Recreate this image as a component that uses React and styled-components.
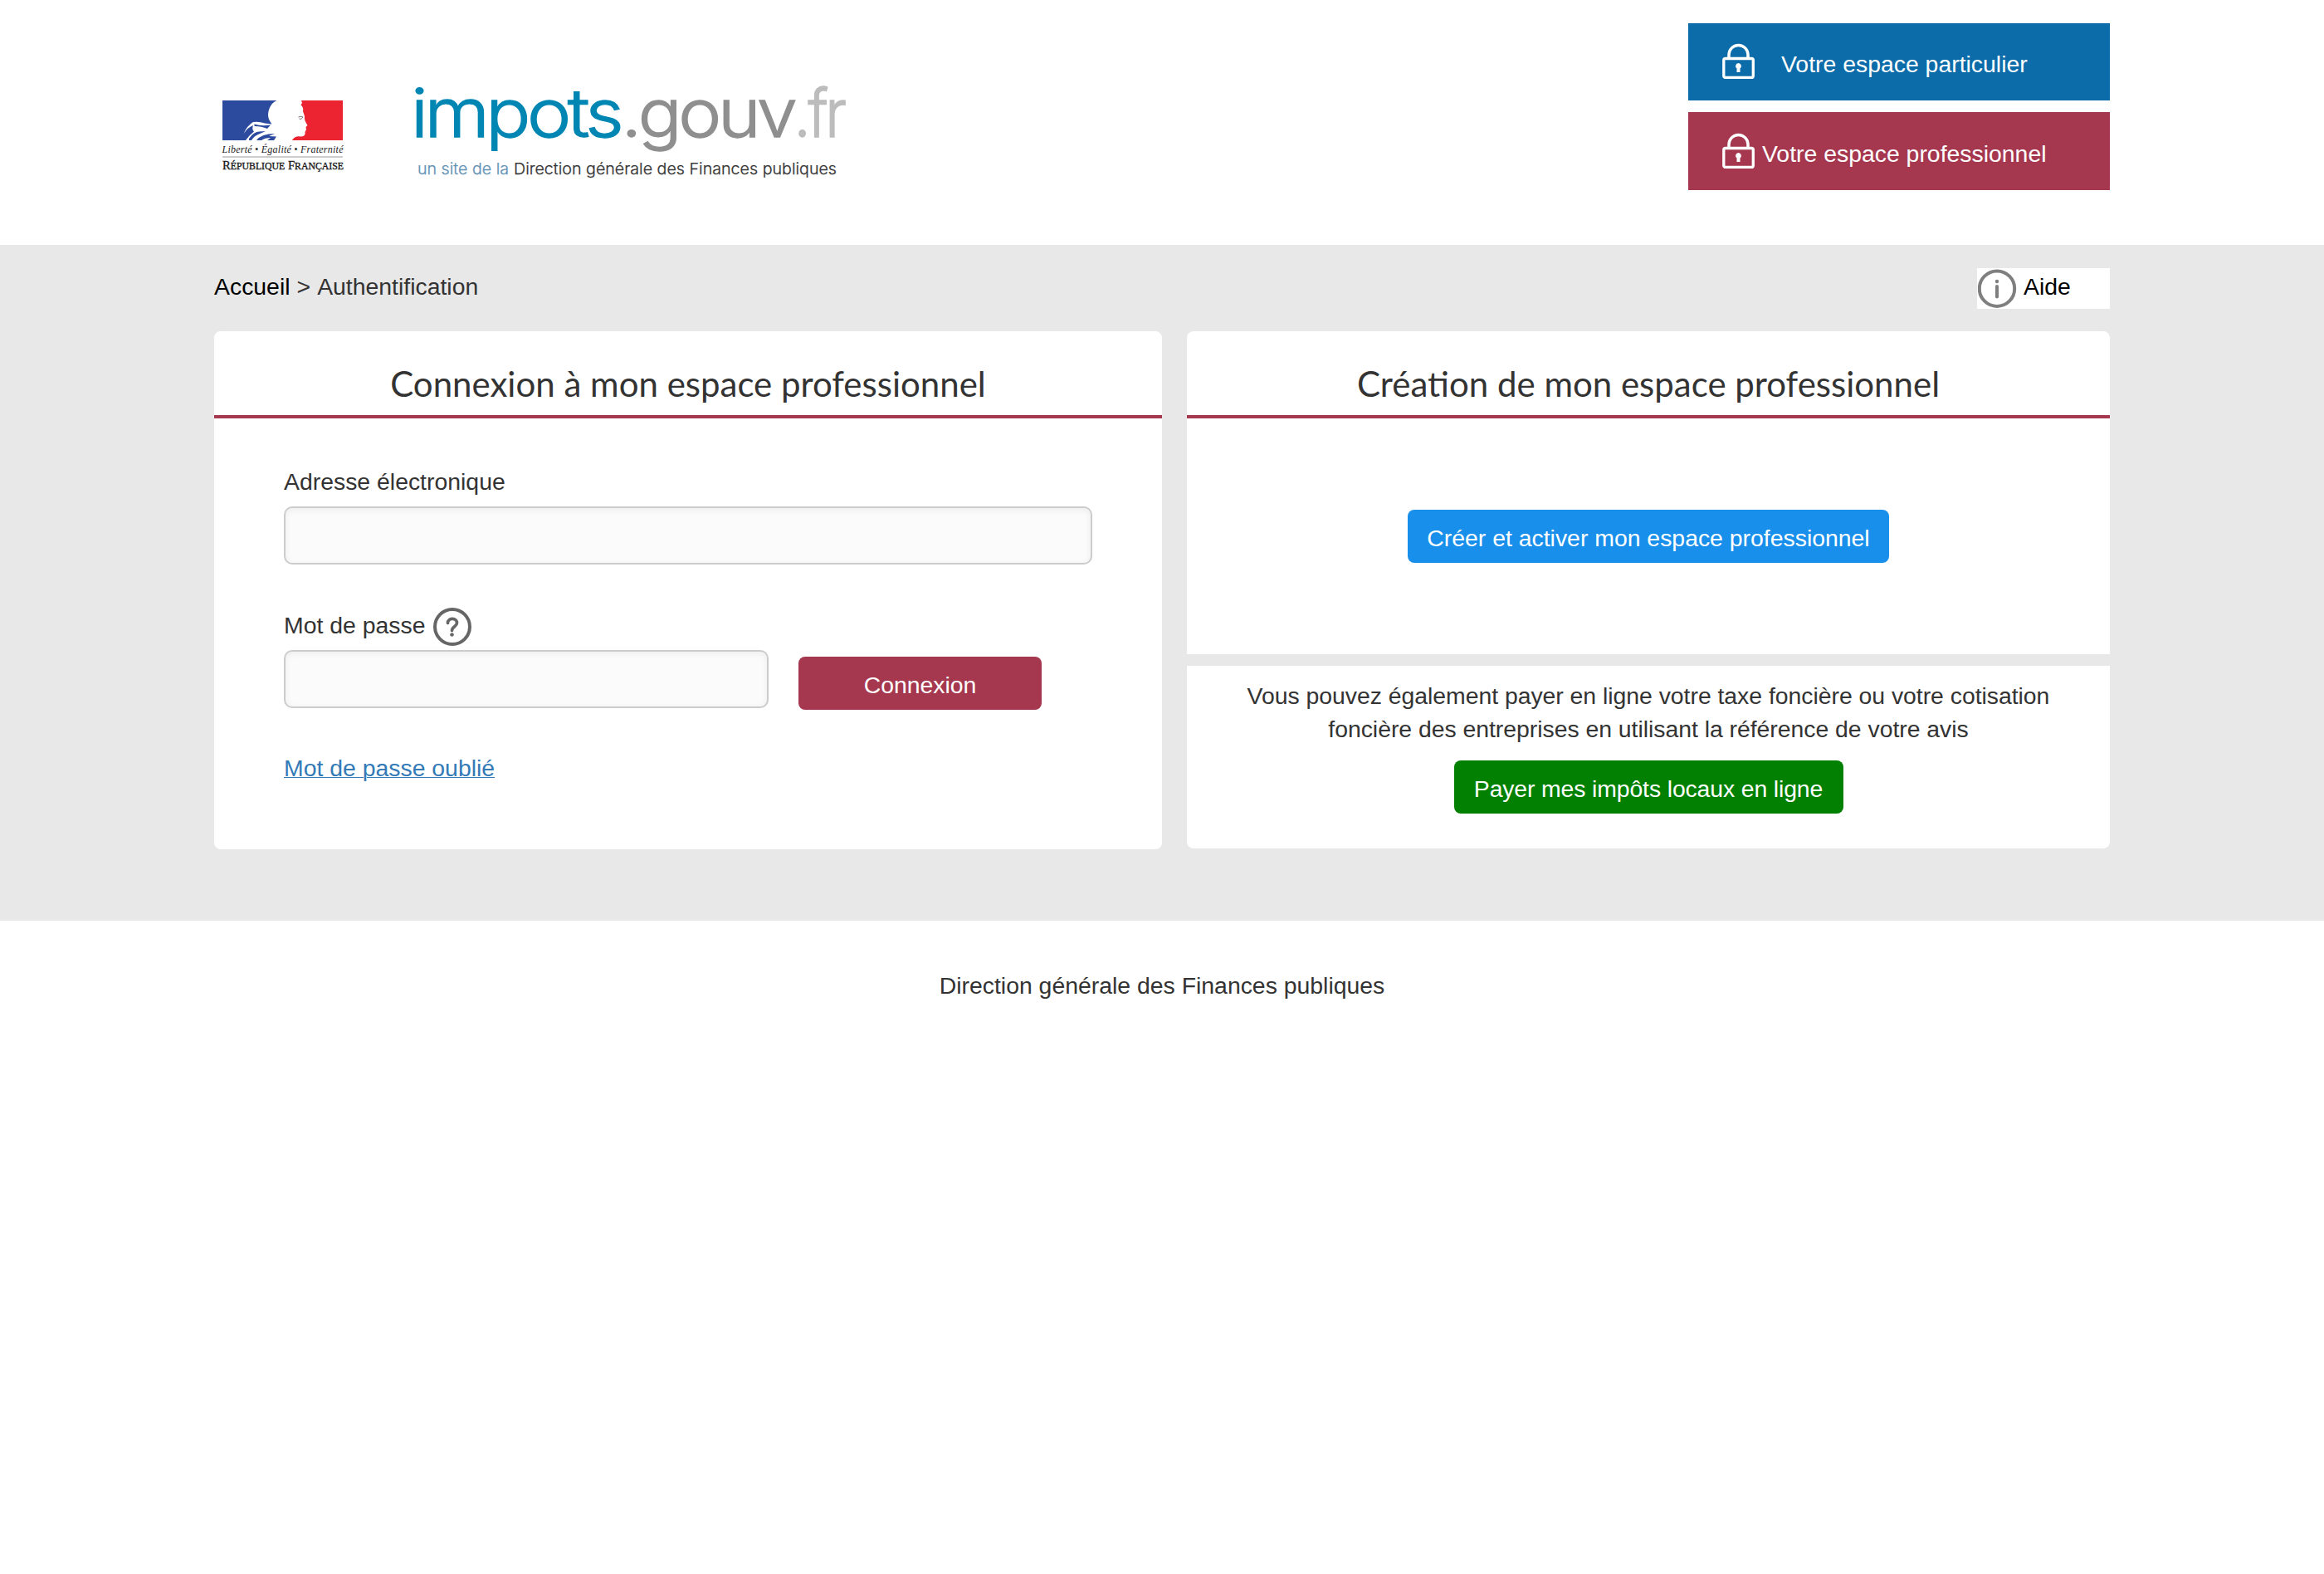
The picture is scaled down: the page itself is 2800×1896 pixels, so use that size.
import React from "react";
import styled, { createGlobalStyle } from "styled-components";

const GlobalStyle = createGlobalStyle`
  *, *::before, *::after { box-sizing: border-box; }
  body {
    margin: 0;
    background: #fff;
    color: #333;
    font-family: Helvetica, "Liberation Sans", sans-serif;
    font-size: 28.4px;
    line-height: 40px;
  }
`;

const Container = styled.div`
  width: 2284px;
  margin: 0 auto;
`;

const Header = styled.header`
  height: 295px;
`;

const HeaderInner = styled(Container)`
  display: flex;
  justify-content: space-between;
  align-items: flex-start;
`;

const Brand = styled.a`
  display: flex;
  gap: 60px;
  padding: 95px 0 0 5px;
`;

const SpaceNav = styled.nav`
  display: flex;
  flex-direction: column;
  gap: 14px;
  width: 508px;
  padding-top: 28px;
`;

const SpaceLink = styled.a`
  display: flex;
  align-items: flex-start;
  height: ${(p) => p.$height}px;
  padding: ${(p) => p.$top}px 0 0 41px;
  gap: ${(p) => p.$gap}px;
  background: ${(p) => p.$color};
  color: #fff;
  white-space: nowrap;
`;

const SpaceLabel = styled.span`
  padding-top: 5px;
`;

const Main = styled.main`
  height: 814px;
  padding-top: 28px;
  background: #e8e8e8;
`;

const TopBar = styled.div`
  display: flex;
  justify-content: space-between;
  height: 76px;
`;

const Breadcrumb = styled.nav`
  display: flex;
  gap: 8px;
  padding-top: 2px;
  color: #333;
`;

const Home = styled.a`
  color: #000;
`;

const Help = styled.a`
  display: flex;
  gap: 8px;
  width: 160px;
  height: 49px;
  padding: 1px 0 0 1px;
  background: #fff;
  color: #000;
`;

const HelpLabel = styled.span`
  padding-top: 1px;
`;

const Columns = styled.div`
  display: grid;
  grid-template-columns: 1142px 1112px;
  gap: 30px;
  align-items: start;
`;

const Side = styled.div`
  display: flex;
  flex-direction: column;
  gap: 14px;
`;

const Card = styled.section`
  height: ${(p) => p.$height}px;
  border-radius: ${(p) => p.$radius || "8px"};
  background: #fff;
`;

const CardTitle = styled.h1`
  height: 105px;
  margin: 0;
  padding-top: 37px;
  border-bottom: 4px solid #a5384f;
  font: 400 42px/52px Lato, sans-serif;
  text-align: center;
`;

const Form = styled.form`
  display: flex;
  flex-direction: column;
  align-items: flex-start;
  padding: 56px 84px 0;
`;

const Label = styled.label`
  display: flex;
  align-items: flex-start;
  gap: 10px;
  height: ${(p) => p.$height}px;
  font-family: "Liberation Sans", sans-serif;
`;

const LabelText = styled.span`
  padding-top: ${(p) => p.$top}px;
`;

const Input = styled.input`
  width: ${(p) => p.$width}px;
  height: 70px;
  padding: 0 20px;
  border: 2px solid #ccc;
  border-radius: 10px;
  background: #fbfbfb;
  box-shadow: inset 0 2px 8px rgba(0, 0, 0, 0.06);
  font: inherit;
  outline: none;
`;

const PasswordField = styled.div`
  margin-top: 52px;
`;

const PasswordRow = styled.div`
  display: flex;
  align-items: flex-start;
  gap: 36px;
`;

const Button = styled.button`
  width: ${(p) => p.$width}px;
  height: 64px;
  margin-top: ${(p) => p.$top || 0}px;
  padding: 3px 0 0;
  border: 0;
  border-radius: 8px;
  background: ${(p) => p.$color};
  color: #fff;
  font: inherit;
  letter-spacing: ${(p) => p.$spacing || 0}px;
  text-align: center;
`;

const ForgotLink = styled.a`
  margin-top: 50px;
  color: #337ab7;
  text-decoration: underline;
  text-decoration-thickness: 1px;
`;

const Centered = styled.div`
  display: flex;
  flex-direction: column;
  align-items: center;
  padding-top: ${(p) => p.$top}px;
  text-align: center;
`;

const Note = styled.p`
  width: 1000px;
  margin: 0 0 18px;
  letter-spacing: -0.03px;
`;

const Footer = styled.footer`
  padding-top: 58px;
  text-align: center;
`;

function FrenchRepublicLogo() {
  return (
    <svg width="150" height="120" viewBox="263 95 150 120" overflow="visible">
      <path fill="#2c4b9f" d="M268 121H333.500C327 124 323.500 130 323 138C323 144 326 147 327.500 149.500L319 148.500Q312 146 305 147Q298 151 293.500 161Q299 153 305 151Q303 156 306 158.500Q301 162 296 169H268Z" />
      <path fill="#2c4b9f" d="M306.500 149.500Q315 152.500 326 150.500L322 155Q315 152 306.500 152ZM300 167Q305 159 312 158.500L320 158L311 162Q306 164 303 169H300ZM309 169Q315 161 331 161L324 164L333 164.500L330 169H322L326 166Q319 166 315 169Z" />
      <path fill="#ec2330" d="M413 121H363L364 124L362.500 126.500Q366 129 365 134L367 140Q366 144 370.500 151L368.500 153L369 156L367.500 159Q368.500 164 363 164.500Q355 163 352 169H413Z" />
      <path fill="none" stroke="#777" strokeWidth="1" d="M359.500 141Q363 139.500 365 141Q363 145 360.500 143" />
      <text x="267.500" y="184" textLength="146" fontFamily="Liberation Serif" fontStyle="italic" fontSize="12" fill="#222">Liberté • Égalité • Fraternité</text>
      <path stroke="#999" d="M268 189H413" />
      <text x="268" y="204" textLength="146" lengthAdjust="spacingAndGlyphs" fontFamily="Liberation Serif" fontSize="14.500" fill="#1a1a1a" stroke="#1a1a1a" strokeWidth="0.35">
        R<tspan fontSize="11.700">ÉPUBLIQUE</tspan> F<tspan fontSize="11.700">RANÇAISE</tspan>
      </text>
    </svg>
  );
}

function SiteLogo() {
  return (
    <svg width="550" height="130" viewBox="473 95 550 130" overflow="visible">
      <g fontFamily="Inter, sans-serif" fontSize="80" fontWeight="300" letterSpacing="-4" strokeWidth="1.300">
        <text x="495" y="165.400" textLength="252" lengthAdjust="spacingAndGlyphs" fill="#0086b3" stroke="#0086b3">impots</text>
        <text x="748.500" y="165.400" textLength="208" lengthAdjust="spacingAndGlyphs" fill="#8f8f8f" stroke="#8f8f8f">.gouv</text>
        <text x="956.500" y="165.400" textLength="60" lengthAdjust="spacingAndGlyphs" fill="#bcbcbc" stroke="#bcbcbc">.fr</text>
      </g>
      <g fontFamily="Inter, sans-serif" fontSize="18.500" fontWeight="300" strokeWidth="0.250">
        <text x="503" y="210" textLength="110" lengthAdjust="spacingAndGlyphs" fill="#5f91b5" stroke="#5f91b5">un site de la</text>
        <text x="619" y="210" textLength="389" lengthAdjust="spacingAndGlyphs" fill="#333" stroke="#333">Direction générale des Finances publiques</text>
      </g>
    </svg>
  );
}

function LockIcon() {
  return (
    <svg width="39" height="43" viewBox="0 0 39 43">
      <path fill="none" stroke="#fff" strokeWidth="3.500" d="M8 18V14A11.500 11.500 0 0 1 31 14V18" />
      <rect x="1.800" y="18.500" width="35.500" height="23" rx="2" fill="none" stroke="#fff" strokeWidth="3.300" />
      <path fill="#fff" d="M19.500 24a3.500 3.500 0 0 1 2 6.300V35h-4v-4.700a3.500 3.500 0 0 1 2-6.300Z" />
    </svg>
  );
}

function InfoIcon() {
  return (
    <svg width="47" height="48" viewBox="0 0 47 48">
      <circle cx="23" cy="23.700" r="21.200" fill="none" stroke="#7f7f7f" strokeWidth="4" />
      <circle cx="23" cy="15" r="2.200" fill="#7f7f7f" />
      <path stroke="#7f7f7f" strokeWidth="4" strokeLinecap="round" d="M23 21V33.500" />
    </svg>
  );
}

function QuestionIcon() {
  return (
    <svg width="46" height="46" viewBox="0 0 46 46">
      <circle cx="23" cy="23" r="21" fill="none" stroke="#666" strokeWidth="4" />
      <path fill="none" stroke="#666" strokeWidth="3.700" strokeLinecap="round" d="M17.500 18.500C17.500 11.500 28.500 12 28.500 18.500C28.500 22.500 22.500 23 22.500 27.500" />
      <circle cx="22.500" cy="32.500" r="2.300" fill="#666" />
    </svg>
  );
}

export default function App() {
  return (
    <>
      <GlobalStyle />
      <Header>
        <HeaderInner>
          <Brand>
            <FrenchRepublicLogo />
            <SiteLogo />
          </Brand>
          <SpaceNav>
            <SpaceLink $height={93} $top={24} $gap={32} $color="#0c6ba9">
              <LockIcon />
              <SpaceLabel>Votre espace particulier</SpaceLabel>
            </SpaceLink>
            <SpaceLink $height={94} $top={25} $gap={9} $color="#a5384f">
              <LockIcon />
              <SpaceLabel>Votre espace professionnel</SpaceLabel>
            </SpaceLink>
          </SpaceNav>
        </HeaderInner>
      </Header>
      <Main>
        <Container>
          <TopBar>
            <Breadcrumb>
              <Home>Accueil</Home>
              <span>&gt;</span>
              <span>Authentification</span>
            </Breadcrumb>
            <Help>
              <InfoIcon />
              <HelpLabel>Aide</HelpLabel>
            </Help>
          </TopBar>
          <Columns>
            <Card $height={624}>
              <CardTitle>Connexion à mon espace professionnel</CardTitle>
              <Form>
                <Label htmlFor="email" $height={50}>
                  <LabelText $top={0}>Adresse électronique</LabelText>
                </Label>
                <Input id="email" $width={974} />
                <PasswordField>
                  <Label htmlFor="password" $height={51}>
                    <LabelText $top={1}>Mot de passe</LabelText>
                    <QuestionIcon />
                  </Label>
                  <PasswordRow>
                    <Input id="password" type="password" $width={584} />
                    <Button type="button" $width={293} $top={8} $color="#a5384f">Connexion</Button>
                  </PasswordRow>
                </PasswordField>
                <ForgotLink>Mot de passe oublié</ForgotLink>
              </Form>
            </Card>
            <Side>
              <Card $height={389} $radius="8px 8px 0 0">
                <CardTitle>Création de mon espace professionnel</CardTitle>
                <Centered $top={110}>
                  <Button type="button" $width={580} $color="#198fec">Créer et activer mon espace professionnel</Button>
                </Centered>
              </Card>
              <Card $height={220} $radius="0 0 8px 8px">
                <Centered $top={16}>
                  <Note>
                    Vous pouvez également payer en ligne votre taxe foncière ou votre cotisation
                    foncière des entreprises en utilisant la référence de votre avis
                  </Note>
                  <Button type="button" $width={469} $color="#018001" $spacing={-0.13}>Payer mes impôts locaux en ligne</Button>
                </Centered>
              </Card>
            </Side>
          </Columns>
        </Container>
      </Main>
      <Footer>Direction générale des Finances publiques</Footer>
    </>
  );
}
